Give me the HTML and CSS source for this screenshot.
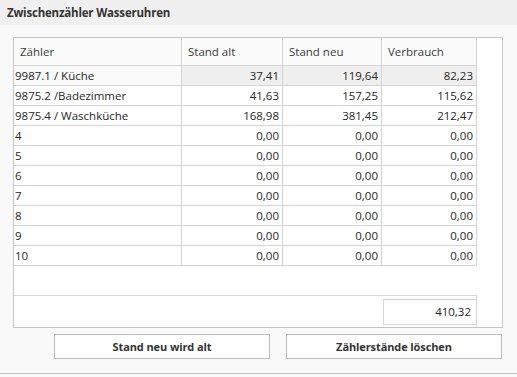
FILE: index.html
```html
<!DOCTYPE html>
<html lang="de">
<head>
<meta charset="utf-8">
<title>Zwischenzähler Wasseruhren</title>
<link rel="stylesheet" href="styles.css">
</head>
<body>
<div class="header"><span class="title">Zwischenzähler Wasseruhren</span></div>
<div class="panel">
  <div class="grid">
    <table class="tbl">
      <colgroup>
        <col class="c1"><col class="c2"><col class="c3"><col class="c4">
      </colgroup>
      <thead>
        <tr><th>Zähler</th><th>Stand alt</th><th>Stand neu</th><th>Verbrauch</th></tr>
      </thead>
      <tbody>
        <tr class="sel"><td>9987.1 / Küche</td><td class="num">37,41</td><td class="num">119,64</td><td class="num">82,23</td></tr>
        <tr><td>9875.2 /Badezimmer</td><td class="num">41,63</td><td class="num">157,25</td><td class="num">115,62</td></tr>
        <tr><td>9875.4 / Waschküche</td><td class="num">168,98</td><td class="num">381,45</td><td class="num">212,47</td></tr>
        <tr><td>4</td><td class="num">0,00</td><td class="num">0,00</td><td class="num">0,00</td></tr>
        <tr><td>5</td><td class="num">0,00</td><td class="num">0,00</td><td class="num">0,00</td></tr>
        <tr><td>6</td><td class="num">0,00</td><td class="num">0,00</td><td class="num">0,00</td></tr>
        <tr><td>7</td><td class="num">0,00</td><td class="num">0,00</td><td class="num">0,00</td></tr>
        <tr><td>8</td><td class="num">0,00</td><td class="num">0,00</td><td class="num">0,00</td></tr>
        <tr><td>9</td><td class="num">0,00</td><td class="num">0,00</td><td class="num">0,00</td></tr>
        <tr><td>10</td><td class="num">0,00</td><td class="num">0,00</td><td class="num">0,00</td></tr>
      </tbody>
    </table>
    <div class="spacer"></div>
    <div class="footer"><div class="total">410,32</div></div>
  </div>
  <div class="buttons">
    <button class="btn" type="button">Stand neu wird alt</button>
    <button class="btn" type="button">Zählerstände löschen</button>
  </div>
</div>
</body>
</html>
```
FILE: styles.css
```css
html, body {
  margin: 0;
  padding: 0;
  background: #f9f9f9;
  font-family: "Open Sans", "Noto Sans", sans-serif;
  font-size: 11.5px;
  color: #262626;
}

.header {
  height: 25px;
  background: #f0f0f0;
  padding-left: 7px;
  box-sizing: border-box;
  display: flex;
  align-items: center;
}

.title {
  font-weight: 700;
  font-size: 11.5px;
  color: #333;
  letter-spacing: -0.2px;
}

.panel {
  height: 349px;
  padding: 12px 0 0 13px;
  box-sizing: border-box;
  border-bottom: 1px solid #c2c2c2;
}

.grid {
  width: 490px;
  height: 291px;
  box-sizing: border-box;
  border: 1px solid #c6c6c6;
  background: #ffffff;
  display: flex;
  flex-direction: column;
}

.tbl {
  border-collapse: separate;
  border-spacing: 0;
  table-layout: fixed;
  width: 463px;
}

.c1 { width: 168px; }
.c2 { width: 101px; }
.c3 { width: 99px; }
.c4 { width: 95px; }

.tbl th,
.tbl td {
  border-right: 1px solid #d4d4d4;
  border-bottom: 1px solid #d4d4d4;
  padding: 0 2px;
  white-space: nowrap;
  overflow: hidden;
}

.tbl th {
  height: 27px;
  font-weight: 400;
  text-align: left;
  padding-left: 6px;
  color: #3a3a3a;
  background: #fbfbfb;
}

.tbl td {
  height: 19px;
  line-height: 19px;
  padding-left: 1px;
}

.tbl td.num {
  text-align: right;
  padding-right: 3px;
}

.tbl tr.sel td {
  background: #efefef;
}

.tbl tr.sel td:first-child {
  background: #fafafa;
}

.spacer {
  height: 29px;
}

.footer {
  width: 463px;
  flex: 1;
  box-sizing: border-box;
  border-top: 1px solid #d4d4d4;
  border-right: 1px solid #d4d4d4;
  display: flex;
  justify-content: flex-end;
  align-items: flex-start;
  padding-top: 3px;
}

.total {
  width: 93px;
  height: 26px;
  box-sizing: border-box;
  border: 1px solid #d4d4d4;
  border-right: none;
  text-align: right;
  line-height: 24px;
  padding-right: 5px;
}

.buttons {
  width: 489px;
  display: flex;
  justify-content: flex-end;
  gap: 16px;
  margin-top: 6px;
}

.btn {
  width: 216px;
  height: 25px;
  box-sizing: border-box;
  background: #ffffff;
  border: 1px solid #bcbcbc;
  border-radius: 0;
  font-family: "Open Sans", "Noto Sans", sans-serif;
  font-weight: 700;
  font-size: 11px;
  letter-spacing: -0.1px;
  color: #333;
  padding: 0;
}
```
